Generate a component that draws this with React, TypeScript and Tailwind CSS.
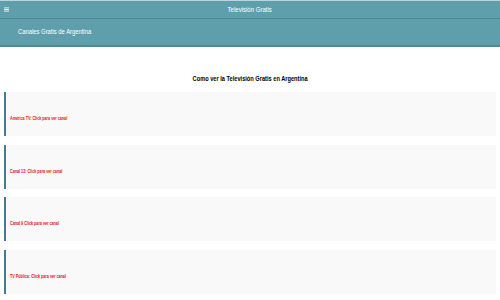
import React from "react";

const channels = [
  "América TV: Click para ver canal",
  "Canal 13: Click para ver canal",
  "Canal 9 Click para ver canal",
  "TV Pública: Click para ver canal",
];

export default function App() {
  return (
    <div
      className="w-[500px] h-[300px] overflow-hidden bg-white"
      style={{ fontFamily: "'Liberation Sans', Arial, sans-serif" }}
    >
      <div className="h-[1px] bg-[#b9d6dc]" />
      <div className="relative h-[18px] bg-[#5f9fac] border-b border-[#4b8694] flex items-center justify-center">
        <svg className="absolute left-[4px] top-[6px]" width="5" height="5" viewBox="0 0 5 5">
          <rect x="0" y="0.5" width="5" height="0.8" fill="white" />
          <rect x="0" y="2.1" width="5" height="0.8" fill="white" />
          <rect x="0" y="3.7" width="5" height="0.8" fill="white" />
        </svg>
        <span className="inline-block text-white text-[7px] leading-none scale-x-[0.86] origin-center">
          Televisión Gratis
        </span>
      </div>
      <div className="h-[28px] bg-[#5f9fac] border-b-2 border-[#4f8a98] flex items-center pl-[18px]">
        <span className="inline-block text-white text-[7.5px] leading-none scale-x-[0.78] origin-left">
          Canales Gratis de Argentina
        </span>
      </div>
      <div className="h-[39px] flex items-end justify-center pb-[4px]">
        <span className="inline-block text-black font-bold text-[6.5px] leading-none scale-x-[0.87] origin-center">
          Como ver la Televisión Gratis en Argentina
        </span>
      </div>
      <div className="flex flex-col gap-[8.5px] pl-[4px] pr-[4px] pt-[6px]">
        {channels.map((c) => (
          <div
            key={c}
            className="h-[44px] bg-[#f9f9f9] border-l-2 border-[#3f7f8d] pl-[4px] flex flex-col items-start"
          >
            <div className="h-[24px]" />
            <span className="inline-block text-[#e0141b] font-bold text-[5px] leading-none scale-x-[0.74] origin-left">
              {c}
            </span>
          </div>
        ))}
      </div>
    </div>
  );
}
